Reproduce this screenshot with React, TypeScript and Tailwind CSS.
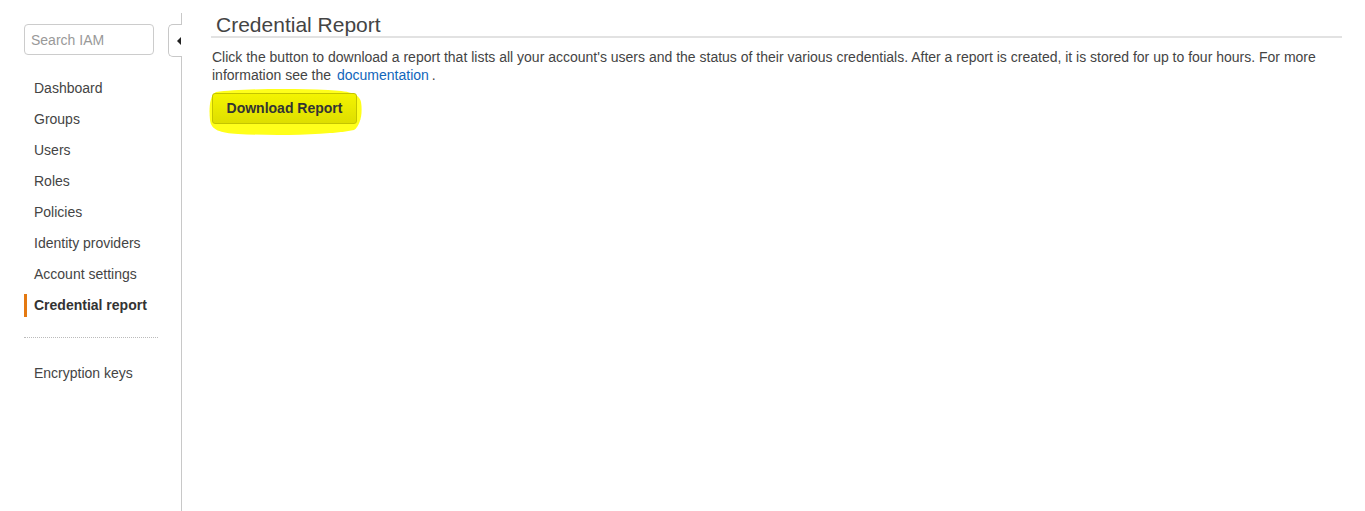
const navItems = [
  'Dashboard',
  'Groups',
  'Users',
  'Roles',
  'Policies',
  'Identity providers',
  'Account settings',
  'Credential report',
]

const active = 'Credential report'

function Sidebar() {
  return (
    <aside className="relative mt-[13px] w-[182px] shrink-0 border-r border-[#c8c8c8]">
      <div className="pl-[24px] pr-[28px] pt-[11px]">
        <input
          placeholder="Search IAM"
          className="h-[31px] w-[130px] rounded-[4px] border border-[#cccccc] px-[6px] text-[14px] text-[#444] outline-none placeholder:text-[#999]"
        />
      </div>

      {/* collapse tab */}
      <div className="absolute right-[-1px] top-[11px] flex h-[33px] w-[14px] items-center justify-end rounded-l-[5px] border border-r-0 border-[#c8c8c8] bg-white pr-[1px]">
        <span className="h-0 w-0 border-y-[4px] border-r-[4px] border-y-transparent border-r-[#222]" />
      </div>

      <nav className="mt-[18px] pl-[24px]">
        {navItems.map(item => {
          const isActive = item === active
          return (
            <div key={item} className="py-[4px]">
              <div
                className={`h-[23px] border-l-[3px] pl-[7px] text-[14px] leading-[23px] ${
                  isActive ? 'border-[#e47911] font-bold text-[#333]' : 'border-transparent text-[#444]'
                }`}
              >
                {item}
              </div>
            </div>
          )
        })}
      </nav>

      <div className="ml-[24px] mr-[23px] mt-[16px] border-t border-dotted border-[#bbb]" />

      <div className="mt-[24px] pl-[24px]">
        <div className="h-[23px] border-l-[3px] border-transparent pl-[7px] text-[14px] leading-[23px] text-[#444]">
          Encryption keys
        </div>
      </div>
    </aside>
  )
}

function Highlight() {
  return (
    <svg className="absolute left-[-4px] top-[-5px]" width="156" height="49" viewBox="0 0 156 49">
      <path
        d="M8 4 C30 1 80 0 120 2 C140 3 151 5 153 14 C155 26 152 38 146 42 C120 47 70 48 30 46 C12 45 3 42 2 32 C1 22 1 8 8 4 Z"
        fill="#ffff1a"
      />
    </svg>
  )
}

export default function App() {
  return (
    <div
      className="flex h-[511px] w-full overflow-hidden bg-white"
      style={{ fontFamily: '"Liberation Sans", Arial, sans-serif' }}
    >
      <Sidebar />
      <main className="flex-1 pl-[29px] pr-[23px] pt-[13px]">
        <h1 className="border-b-2 border-[#e2e2e2] pl-[5px] text-[21px] leading-[23px] text-[#444]">
          Credential Report
        </h1>
        <p className="mt-[10px] pl-[1px] text-[14px] leading-[18px] text-[#444]">
          Click the button to download a report that lists all your account's users and the status of their various
          credentials. After a report is created, it is stored for up to four hours. For more information see the{' '}
          <a href="#" className="ml-[2px] text-[#1166bb]">
            documentation
          </a>
          <span className="ml-[3px]">.</span>
        </p>
        <div className="relative mt-[9px] ml-[1px] inline-block">
          <Highlight />
          <button className="relative h-[31px] w-[145px] rounded-[3px] border border-[#c4c400] bg-gradient-to-b from-[#f4f400] to-[#dede00] text-[14px] font-bold text-[#333]">
            Download Report
          </button>
        </div>
      </main>
    </div>
  )
}
